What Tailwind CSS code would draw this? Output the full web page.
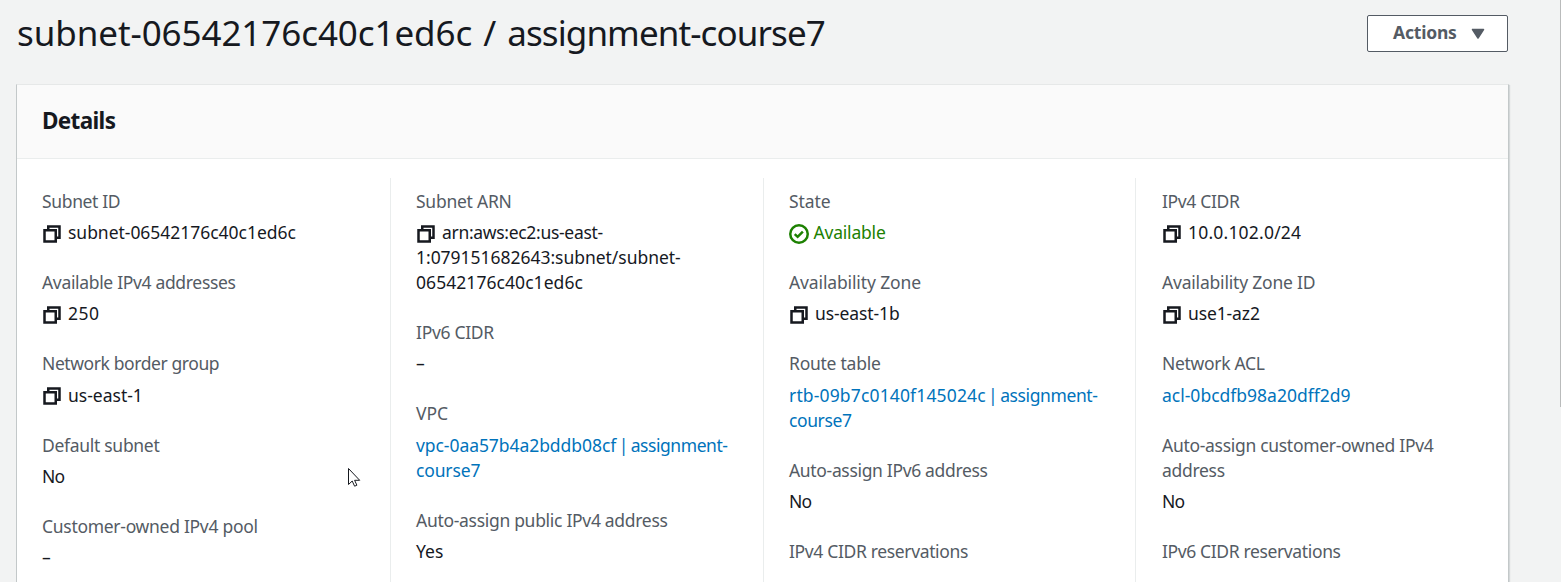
<!DOCTYPE html>
<html lang="en">
<head>
<meta charset="utf-8">
<title>Subnet details</title>
<script src="https://cdn.jsdelivr.net/npm/@tailwindcss/browser@4"></script>
</head>
<body class="h-[582px] overflow-hidden bg-[#f2f3f3] font-['Noto_Sans',sans-serif] text-[17.5px] leading-[25px] text-[#16191f]">
<svg class="hidden">
  <symbol id="copy" viewBox="0 0 16 16"><path d="M2 5h9v9H2z M5 5V2h9v9h-3" fill="none" stroke="currentColor" stroke-width="2"/></symbol>
</svg>
<div class="relative flex h-[582px] flex-col pl-4 pr-[52px]">
  <header class="flex h-[84px] shrink-0 items-start justify-between pr-px">
    <h1 class="mt-[10px] pl-px text-[35px] leading-[45px] tracking-[-0.08px] [word-spacing:2px]">subnet-06542176c40c1ed6c / <span class="tracking-[-0.9px]">assignment-course7</span></h1>
    <button class="mt-[15px] flex h-[37px] w-[141px] items-center rounded-[2px] border border-[#545b64] bg-white pl-[25px] font-bold tracking-[-0.2px] text-[#545b64]"><span class="-mt-0.5">Actions</span>
      <svg class="ml-[14px] h-3 w-[14px]" viewBox="0 0 14 12"><path d="M1.5 1.5h11L7 10z" fill="currentColor" stroke="currentColor" stroke-width="1.5" stroke-linejoin="round"/></svg>
    </button>
  </header>
  <main class="flex flex-1 flex-col border-x border-t border-t-[#e6e8e8] border-x-[#c3c8c9] bg-white shadow-[1px_1px_1px_0_rgba(0,28,36,0.12)]">
    <div class="flex h-[74px] shrink-0 items-center border-b border-[#eaeded] bg-[#fafafa] pb-0.5 pl-[25px]">
      <h2 class="text-[22.5px] leading-[28px] font-bold tracking-[-0.65px]">Details</h2>
    </div>
    <div class="grid flex-1 grid-cols-[374px_373px_372px_1fr] pt-[19px]">
      <dl class="flex flex-col gap-[25px] border-r border-[#eaeded] pt-[10.8px] pl-[25px]">
        <div><dt class="mb-[6.25px] tracking-[-0.35px] text-[#545b64]">Subnet ID</dt><dd class="flex items-center gap-1.5 tracking-[-0.03px]"><svg class="mt-0.5 size-5"><use href="#copy"/></svg>subnet-06542176c40c1ed6c</dd></div>
        <div><dt class="mb-[6.25px] tracking-[-0.33px] text-[#545b64]">Available IPv4 addresses</dt><dd class="flex items-center gap-1.5 tracking-[0.5px]"><svg class="mt-0.5 size-5"><use href="#copy"/></svg>250</dd></div>
        <div><dt class="mb-[6.25px] tracking-[-0.41px] text-[#545b64]">Network border group</dt><dd class="flex items-center gap-1.5"><svg class="mt-0.5 size-5"><use href="#copy"/></svg>us-east-1</dd></div>
        <div><dt class="mb-[6.25px] tracking-[-0.3px] text-[#545b64]">Default subnet</dt><dd class="tracking-[-0.9px]">No</dd></div>
        <div><dt class="mb-[6.25px] tracking-[-0.29px] text-[#545b64]">Customer-owned IPv4 pool</dt><dd>–</dd></div>
      </dl>
      <dl class="flex flex-col gap-[25px] border-r border-[#eaeded] pt-[10.8px] pl-[25px]">
        <div><dt class="mb-[6.25px] tracking-[-0.25px] text-[#545b64]">Subnet ARN</dt><dd><span class="flex items-center gap-1.5 tracking-[-0.31px]"><svg class="mt-0.5 size-5"><use href="#copy"/></svg>arn:aws:ec2:us-east-</span><span class="tracking-[-0.03px]">1:079151682643:subnet/subnet-</span><br><span class="tracking-[0.06px]">06542176c40c1ed6c</span></dd></div>
        <div><dt class="mb-[6.25px] tracking-[-0.3px] text-[#545b64]">IPv6 CIDR</dt><dd>–</dd></div>
        <div><dt class="mb-[6.25px] tracking-[-0.1px] text-[#545b64]">VPC</dt><dd class="text-[#0073bb]"><span class="tracking-[-0.06px] [word-spacing:-2px]">vpc-0aa57b4a2bddb08cf | </span><span class="tracking-[-0.45px]">assignment-</span><br><span class="tracking-[-0.15px]">course7</span></dd></div>
        <div><dt class="mb-[6.25px] tracking-[-0.3px] text-[#545b64]">Auto-assign public IPv4 address</dt><dd>Yes</dd></div>
      </dl>
      <dl class="flex flex-col gap-[25px] border-r border-[#eaeded] pt-[10.8px] pl-[25px]">
        <div><dt class="mb-[6.25px] tracking-[-0.1px] text-[#545b64]">State</dt><dd class="flex items-center gap-[4.5px] tracking-[-0.2px] text-[#1d8102]"><svg class="mt-0.5 size-5" viewBox="0 0 16 16" fill="none" stroke="currentColor" stroke-width="2"><circle cx="8" cy="8" r="7"/><path d="M4.6 8.1l2.3 2.2 4.2-4.2"/></svg>Available</dd></div>
        <div><dt class="mb-[6.25px] tracking-[-0.13px] text-[#545b64]">Availability Zone</dt><dd class="flex items-center gap-1.5 tracking-[-0.1px]"><svg class="mt-0.5 size-5"><use href="#copy"/></svg>us-east-1b</dd></div>
        <div><dt class="mb-[6.25px] tracking-[-0.25px] text-[#545b64]">Route table</dt><dd class="text-[#0073bb]"><span class="tracking-[0.15px] [word-spacing:-2.4px]">rtb-09b7c0140f145024c | </span><span class="tracking-[-0.4px]">assignment-</span><br><span class="tracking-[-0.4px]">course7</span></dd></div>
        <div><dt class="mb-[6.25px] tracking-[-0.33px] text-[#545b64]">Auto-assign IPv6 address</dt><dd class="tracking-[-0.9px]">No</dd></div>
        <div><dt class="mb-[6.25px] tracking-[-0.35px] text-[#545b64]">IPv4 CIDR reservations</dt></div>
      </dl>
      <dl class="flex flex-col gap-[25px] pt-[10.8px] pl-[26px]">
        <div><dt class="mb-[6.25px] tracking-[-0.35px] text-[#545b64]">IPv4 CIDR</dt><dd class="flex items-center gap-1.5 tracking-[0.2px]"><svg class="mt-0.5 size-5"><use href="#copy"/></svg>10.0.102.0/24</dd></div>
        <div><dt class="mb-[6.25px] tracking-[-0.2px] text-[#545b64]">Availability Zone ID</dt><dd class="flex items-center gap-1.5 tracking-[-0.12px]"><svg class="mt-0.5 size-5"><use href="#copy"/></svg>use1-az2</dd></div>
        <div><dt class="mb-[6.25px] tracking-[-0.3px] text-[#545b64]">Network ACL</dt><dd class="text-[#0073bb]">acl-0bcdfb98a20dff2d9</dd></div>
        <div><dt class="mb-[6.25px] tracking-[-0.3px] text-[#545b64]">Auto-assign customer-owned IPv4<br>address</dt><dd class="tracking-[-0.9px]">No</dd></div>
        <div><dt class="mb-[6.25px] tracking-[-0.37px] text-[#545b64]">IPv6 CIDR reservations</dt></div>
      </dl>
    </div>
  </main>
  <div class="absolute top-0 right-0 h-[407px] w-px bg-[#b9bbbb]"></div>
  <svg class="absolute top-[468px] left-[348px] h-[20px] w-[13px]" viewBox="0 0 13 20"><path d="M.5.5v16l3.7-3.5 2.4 5.2 2.3-1-2.3-4.9h5.1z" fill="#fff" stroke="#16191f"/></svg>
</div>
</body>
</html>
